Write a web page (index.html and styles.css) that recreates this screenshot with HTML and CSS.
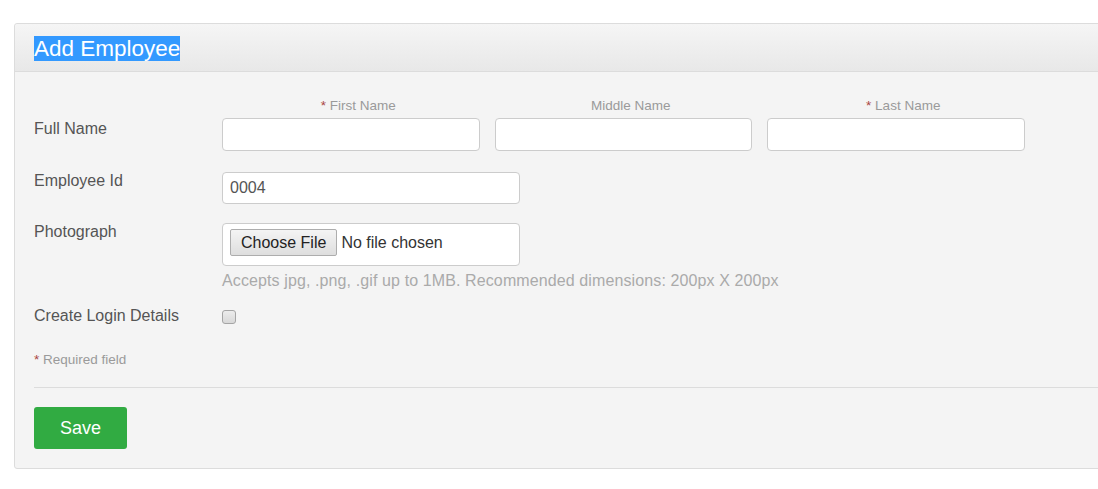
FILE: index.html
```html
<!DOCTYPE html>
<html lang="en">
<head>
<meta charset="utf-8">
<title>Add Employee</title>
<link rel="stylesheet" href="styles.css">
</head>
<body>
<div class="page">
  <section class="panel">
    <header class="panel-head">
      <h1 class="panel-title"><span class="selected">Add Employee</span></h1>
    </header>
    <form class="panel-body">
      <div class="row row-name">
        <label class="row-label">Full Name</label>
        <div class="name-grid">
          <div class="name-col">
            <span class="sublabel"><em class="req">*</em> First Name</span>
            <input class="text-input" type="text">
          </div>
          <div class="name-col">
            <span class="sublabel">Middle Name</span>
            <input class="text-input" type="text">
          </div>
          <div class="name-col">
            <span class="sublabel"><em class="req">*</em> Last Name</span>
            <input class="text-input" type="text">
          </div>
        </div>
      </div>
      <div class="row row-id">
        <label class="row-label">Employee Id</label>
        <input class="text-input id-input" type="text" value="0004">
      </div>
      <div class="row row-photo">
        <label class="row-label">Photograph</label>
        <div class="photo-field">
          <input class="file-input" type="file">
          <p class="hint">Accepts jpg, .png, .gif up to 1MB. Recommended dimensions: 200px X 200px</p>
        </div>
      </div>
      <div class="row row-login">
        <label class="row-label">Create Login Details</label>
        <input class="check" type="checkbox">
      </div>
      <p class="required-note"><em class="req">*</em> Required field</p>
      <div class="panel-foot">
        <button class="btn-save" type="button">Save</button>
      </div>
    </form>
  </section>
</div>
</body>
</html>
```

FILE: styles.css
```css
html, body {
  margin: 0;
  padding: 0;
  background: #ffffff;
  overflow: hidden;
}

body {
  font-family: "Liberation Sans", Arial, sans-serif;
  color: #555555;
}

.page {
  padding: 23px 0 0 14px;
}

.panel {
  width: 1140px;
  border: 1px solid #dcdcdc;
  border-radius: 3px;
  background: #f4f4f4;
}

.panel-head {
  height: 48px;
  box-sizing: border-box;
  padding: 12px 19px 0;
  background: linear-gradient(#f5f5f5, #e8e8e8);
  border-bottom: 1px solid #dcdcdc;
  border-radius: 3px 3px 0 0;
}

.panel-title {
  margin: 0;
  font-size: 22.5px;
  font-weight: normal;
  line-height: 25px;
}

.selected {
  background: #3399ff;
  color: #ffffff;
}

.panel-body {
  padding: 25px 0 19px 19px;
  display: block;
}

.row {
  display: grid;
  grid-template-columns: 188px auto;
  align-items: start;
  justify-content: start;
}

.row-label {
  font-size: 16px;
  line-height: 18px;
  color: #555555;
}

.row-name {
  margin-bottom: 21px;
}

.row-name .row-label {
  padding-top: 23px;
}

.name-grid {
  display: grid;
  grid-template-columns: repeat(3, 257.5px);
  column-gap: 15px;
}

.name-col {
  display: flex;
  flex-direction: column;
  align-items: stretch;
}

.sublabel {
  font-size: 13.5px;
  line-height: 17px;
  color: #9a9a9a;
  text-align: center;
  padding-left: 15px;
  margin-bottom: 4px;
}

.req {
  font-style: normal;
  color: #a94442;
}

.text-input {
  box-sizing: border-box;
  height: 33px;
  margin: 0;
  padding: 0 7px;
  border: 1px solid #cccccc;
  border-radius: 4px;
  background: #ffffff;
  font-family: "Liberation Sans", Arial, sans-serif;
  font-size: 16px;
  color: #555555;
  outline: none;
}

.row-id {
  margin-bottom: 19px;
}

.id-input {
  width: 298px;
  height: 32px;
}

.row-photo {
  margin-bottom: 17px;
}

.photo-field {
  display: flex;
  flex-direction: column;
}

.file-input {
  box-sizing: border-box;
  width: 298px;
  height: 43px;
  margin: 0;
  padding: 5px 7px 9px;
  border: 1px solid #cccccc;
  border-radius: 4px;
  background: #ffffff;
  font-family: "Liberation Sans", Arial, sans-serif;
  font-size: 16px;
  color: #333333;
}

.file-input::file-selector-button {
  height: 27px;
  margin: 0 4px 0 0;
  padding: 0 10px;
  border: 1px solid #adadad;
  border-radius: 2px;
  background: linear-gradient(#f4f4f4, #dedede);
  font-family: "Liberation Sans", Arial, sans-serif;
  font-size: 16px;
  color: #222222;
}

.hint {
  margin: 6px 0 0;
  font-size: 16px;
  line-height: 18px;
  letter-spacing: 0.11px;
  color: #aaaaaa;
  white-space: nowrap;
}

.check {
  appearance: none;
  -webkit-appearance: none;
  box-sizing: border-box;
  width: 14px;
  height: 14px;
  margin: 3px 0 0;
  border: 1px solid #a5a5a5;
  border-radius: 3px;
  background: linear-gradient(#ececec, #d8d8d8);
}

.required-note {
  margin: 27px 0 0;
  font-size: 13.5px;
  line-height: 15px;
  color: #9a9a9a;
}

.panel-foot {
  margin-top: 20px;
  padding-top: 19px;
  border-top: 1px solid #dcdcdc;
}

.btn-save {
  width: 93px;
  height: 42px;
  padding: 0;
  border: none;
  border-radius: 3px;
  background: #31ab42;
  font-family: "Liberation Sans", Arial, sans-serif;
  font-size: 18px;
  color: #ffffff;
  cursor: pointer;
}
```
